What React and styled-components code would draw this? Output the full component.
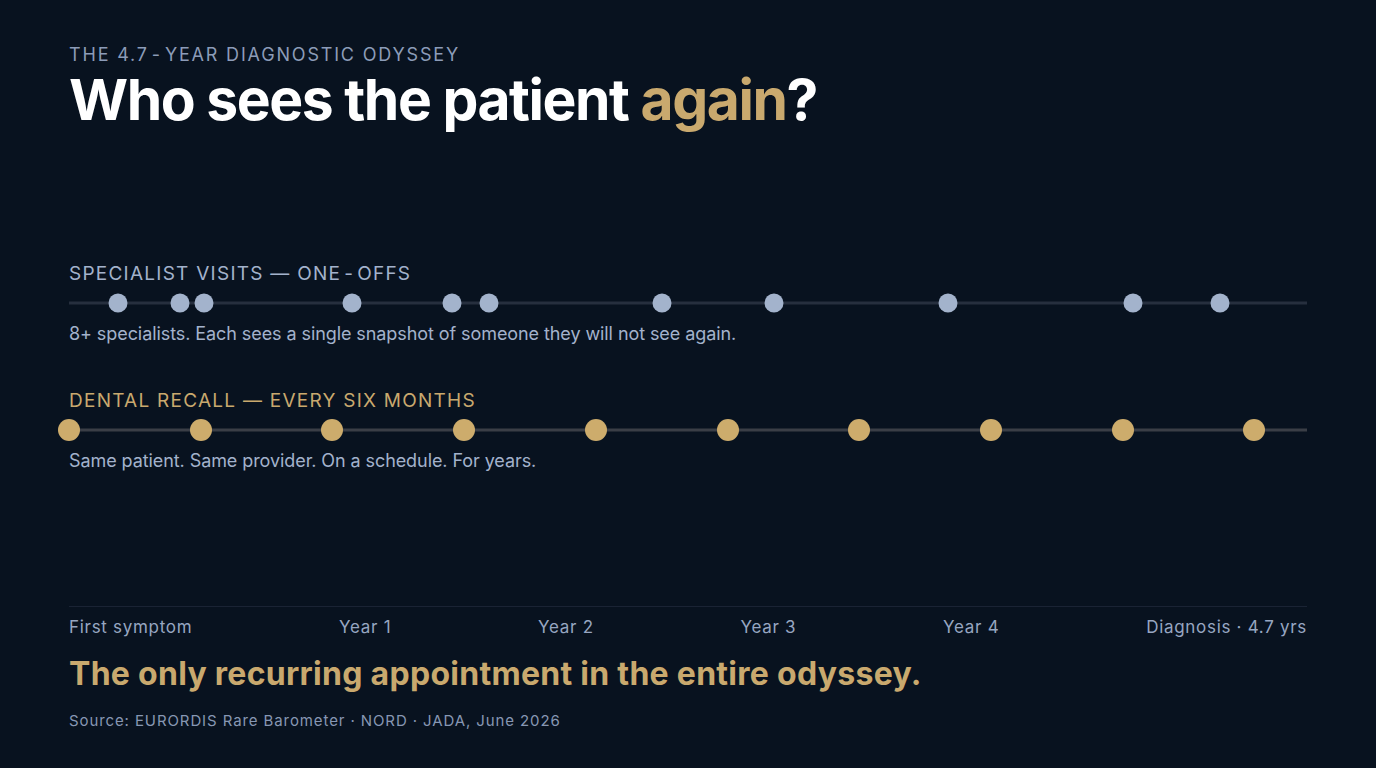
import React from "react";
import styled, { createGlobalStyle } from "styled-components";

const GlobalStyle = createGlobalStyle`
  html, body { margin: 0; padding: 0; background: #08121f; }
  body { font-family: Inter, "Noto Sans", sans-serif; -webkit-font-smoothing: antialiased; }
`;

const Page = styled.div`
  width: 1376px;
  height: 768px;
  box-sizing: border-box;
  padding: 44px 69px 0 69px;
  background: #08121f;
  display: flex;
  flex-direction: column;
`;

const Eyebrow = styled.div`
  font-size: 18px;
  line-height: 22px;
  letter-spacing: 1.82px;
  color: #8c9cb8;
  text-transform: uppercase;
`;

const Hyphen = styled.span`
  display: inline-block;
  margin: 0 3px;
`;

const Title = styled.h1`
  margin: 0;
  font-size: 57px;
  line-height: 68px;
  font-weight: 700;
  letter-spacing: -1.45px;
  color: #ffffff;
`;

const Accent = styled.span`
  color: #c9a96e;
`;

const Section = styled.section`
  margin-top: ${(p) => p.$top}px;
  display: flex;
  flex-direction: column;
`;

const Label = styled.div`
  font-size: 19px;
  line-height: 24px;
  letter-spacing: 1.25px;
  text-transform: uppercase;
  color: ${(p) => (p.$gold ? "#c9a96e" : "#a3b2cc")};
`;

const Track = styled.div`
  position: relative;
  height: 22px;
  margin-top: 6px;
`;

const Line = styled.div`
  position: absolute;
  left: 0;
  right: 0;
  top: 50%;
  height: 3px;
  transform: translateY(-50%);
  background: ${(p) => (p.$gold ? "#3a3e46" : "#262f3e")};
`;

const Dot = styled.div`
  position: absolute;
  top: 50%;
  width: ${(p) => p.$size}px;
  height: ${(p) => p.$size}px;
  border-radius: 50%;
  transform: translate(-50%, -50%);
  background: ${(p) => (p.$gold ? "#cdac6c" : "#a3b3cc")};
`;

const Desc = styled.div`
  margin-top: 8px;
  font-size: 18px;
  line-height: 24px;
  letter-spacing: -0.08px;
  color: #a3b2cc;
`;

const Axis = styled.div`
  margin-top: auto;
  border-top: 1px solid #1a2334;
  padding-top: 10px;
  display: flex;
  justify-content: space-between;
`;

const Tick = styled.span`
  font-size: 17px;
  line-height: 20px;
  letter-spacing: 0.7px;
  color: #97a6c1;
`;

const Conclusion = styled.div`
  margin-top: 16px;
  font-size: 32px;
  line-height: 42px;
  font-weight: 700;
  letter-spacing: 0.28px;
  color: #c9a96e;
`;

const Source = styled.div`
  margin-top: 16px;
  margin-bottom: 37px;
  font-size: 15px;
  line-height: 20px;
  letter-spacing: 0.9px;
  color: #8797b3;
`;

const TOTAL = 4.7;
const specialist = [0.186, 0.421, 0.513, 1.074, 1.454, 1.594, 2.251, 2.676, 3.337, 4.039, 4.37];
const dental = [0, 0.5, 1, 1.5, 2, 2.5, 3, 3.5, 4, 4.5];
const ticks = ["First symptom", "Year 1", "Year 2", "Year 3", "Year 4", "Diagnosis · 4.7 yrs"];

export default function App() {
  return (
    <>
      <GlobalStyle />
      <Page>
        <Eyebrow>
          The 4.7<Hyphen>-</Hyphen>year diagnostic odyssey
        </Eyebrow>
        <Title>
          Who sees the patient <Accent>again</Accent>?
        </Title>

        <Section $top={128}>
          <Label>
            Specialist visits — one<Hyphen>-</Hyphen>offs
          </Label>
          <Track>
            <Line />
            {specialist.map((t, i) => (
              <Dot key={i} $size={19} style={{ left: `${(t / TOTAL) * 100}%` }} />
            ))}
          </Track>
          <Desc>8+ specialists. Each sees a single snapshot of someone they will not see again.</Desc>
        </Section>

        <Section $top={43}>
          <Label $gold>Dental recall — every six months</Label>
          <Track>
            <Line $gold />
            {dental.map((t, i) => (
              <Dot key={i} $gold $size={22} style={{ left: `${(t / TOTAL) * 100}%` }} />
            ))}
          </Track>
          <Desc>Same patient. Same provider. On a schedule. For years.</Desc>
        </Section>

        <Axis>
          {ticks.map((t) => (
            <Tick key={t}>{t}</Tick>
          ))}
        </Axis>
        <Conclusion>The only recurring appointment in the entire odyssey.</Conclusion>
        <Source>Source: EURORDIS Rare Barometer · NORD · JADA, June 2026</Source>
      </Page>
    </>
  );
}
